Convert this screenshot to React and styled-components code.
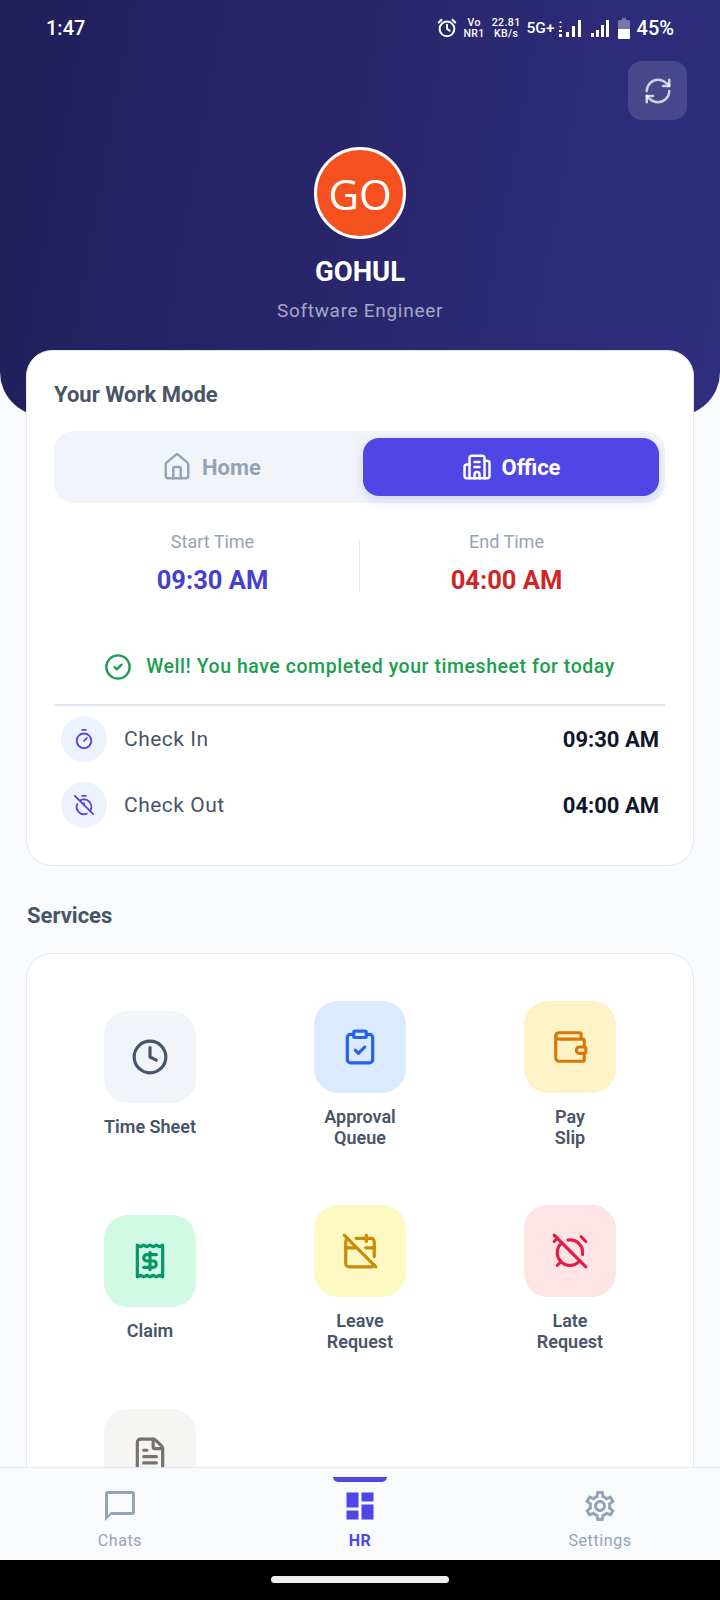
import React from 'react';
import styled, { createGlobalStyle } from 'styled-components';
import {
  RefreshCw, House, Building2, CircleCheck, Timer, TimerOff, Clock, ClipboardCheck,
  Wallet, Receipt, CalendarOff, AlarmClockOff, FileText,
} from 'lucide-react';
import { MdChatBubbleOutline, MdDashboard, MdOutlineSettings } from 'react-icons/md';

const GlobalStyle = createGlobalStyle`
  html, body {
    margin: 0;
    padding: 0;
    background: #000;
  }
  * {
    box-sizing: border-box;
  }
`;

const Screen = styled.div`
  width: 720px;
  height: 1600px;
  display: flex;
  flex-direction: column;
  overflow: hidden;
  background: #f8fafc;
  font-family: Roboto, "Liberation Sans", sans-serif;
`;

const Scroll = styled.div`
  flex: 1;
  min-height: 0;
  overflow: hidden;
`;

const Hero = styled.header`
  height: 416px;
  margin-bottom: -66px;
  padding: 18px 46px 0;
  display: flex;
  flex-direction: column;
  align-items: center;
  background: linear-gradient(100deg, #211f58 0%, #312e81 100%);
  border-radius: 0 0 44px 44px;
  color: #fff;
`;

const StatusBar = styled.div`
  width: 100%;
  height: 20px;
  display: flex;
  align-items: center;
  justify-content: space-between;
`;

const Clockface = styled.span`
  font-size: 20px;
  font-weight: 500;
`;

const StatusIcons = styled.div`
  display: flex;
  align-items: center;
  gap: 5px;
`;

const TinyStack = styled.span`
  margin: 0 1px;
  display: flex;
  flex-direction: column;
  align-items: center;
  font-size: 10.5px;
  font-weight: 500;
  line-height: 11px;
  letter-spacing: 0.4px;
`;

const Net = styled.span`
  margin-right: -1px;
  font-size: 15.5px;
  font-weight: 500;
`;

const Battery = styled.span`
  margin-left: 2px;
  font-size: 20px;
  font-weight: 500;
`;

const RefreshRow = styled.div`
  width: 100%;
  margin-top: 23px;
  display: flex;
  justify-content: flex-end;
`;

const RefreshButton = styled.button`
  width: 59px;
  height: 59px;
  margin-right: -13px;
  display: flex;
  align-items: center;
  justify-content: center;
  border: 0;
  border-radius: 14px;
  background: rgba(255, 255, 255, 0.13);
  color: rgba(255, 255, 255, 0.75);
`;

const Avatar = styled.div`
  width: 92px;
  height: 92px;
  margin-top: 27px;
  display: flex;
  align-items: center;
  justify-content: center;
  border: 3px solid #fff;
  border-radius: 50%;
  background: #f4511e;
  font-family: "Open Sans", sans-serif;
  font-size: 42px;
  color: #fff;
`;

const Name = styled.h1`
  margin: 18px 0 0;
  font-size: 27.5px;
  line-height: 30px;
  font-weight: 700;
`;

const Role = styled.p`
  margin: 12px 0 0;
  font-size: 19px;
  line-height: 24px;
  letter-spacing: 0.7px;
  color: rgba(255, 255, 255, 0.6);
`;

const Card = styled.section`
  margin: 0 26px;
  background: #fff;
  border: 1.5px solid #e2e8f0;
  border-radius: 26px;
`;

const WorkCard = styled(Card)`
  position: relative;
  height: 516px;
  padding: 30px 28px 0 27px;
`;

const CardTitle = styled.h2`
  margin: 0;
  font-size: 22px;
  line-height: 28px;
  font-weight: 700;
  color: #475569;
`;

const Toggle = styled.div`
  height: 72px;
  margin-top: 22px;
  padding: 7px 6px;
  display: grid;
  grid-template-columns: 1fr 296px;
  background: #f1f5f9;
  border-radius: 20px;
`;

const ToggleOption = styled.div`
  display: flex;
  align-items: center;
  justify-content: center;
  gap: 10px;
  border-radius: 16px;
  font-size: 22px;
  font-weight: 700;
  color: ${(p) => (p.$active ? '#fff' : '#94a3b8')};
  background: ${(p) => (p.$active ? '#4f46e5' : 'transparent')};
  box-shadow: ${(p) => (p.$active ? '0 4px 12px rgba(79, 70, 229, 0.2)' : 'none')};
`;

const Times = styled.div`
  margin-top: 27px;
  padding: 0 12px;
  display: grid;
  grid-template-columns: 1fr 1px 1fr;
  align-items: center;
`;

const TimeCell = styled.div`
  display: flex;
  flex-direction: column;
  align-items: center;
  gap: 12px;
`;

const TimeLabel = styled.span`
  font-size: 18px;
  line-height: 24px;
  color: #94a3b8;
`;

const TimeValue = styled.span`
  font-size: 25.5px;
  line-height: 28px;
  font-weight: 700;
  color: ${(p) => p.$color};
`;

const VRule = styled.div`
  height: 53px;
  margin-top: 6px;
  background: #e2e8f0;
`;

const Message = styled.div`
  margin-top: 59px;
  display: flex;
  align-items: center;
  justify-content: center;
  gap: 14px;
  font-size: 19.5px;
  line-height: 28px;
  font-weight: 500;
  letter-spacing: 0.55px;
  color: #1b9e4f;
`;

const HRule = styled.div`
  height: 2px;
  margin-top: 23px;
  background: #e2e8f0;
`;

const CheckRows = styled.div`
  padding: 10px 6px 0 7px;
  display: flex;
  flex-direction: column;
  gap: 20px;
`;

const CheckRow = styled.div`
  display: flex;
  align-items: center;
  gap: 17px;
`;

const CheckIcon = styled.div`
  width: 46px;
  height: 46px;
  display: flex;
  align-items: center;
  justify-content: center;
  border-radius: 50%;
  background: #eef2ff;
  color: #4f46e5;
`;

const CheckLabel = styled.span`
  flex: 1;
  font-size: 21px;
  letter-spacing: 0.5px;
  color: #475569;
`;

const CheckTime = styled.span`
  font-size: 22px;
  font-weight: 700;
  color: #0f172a;
`;

const SectionTitle = styled.h2`
  margin: 36px 27px 23px;
  font-size: 22px;
  line-height: 28px;
  font-weight: 700;
  color: #475569;
`;

const ServiceCard = styled(Card)`
  padding: 18px 18px 0;
  display: grid;
  grid-template-columns: repeat(3, 1fr);
  grid-auto-rows: 204px;
`;

const Service = styled.div`
  display: flex;
  flex-direction: column;
  align-items: center;
  justify-content: center;
  gap: 13px;
`;

const Tile = styled.div`
  width: 92px;
  height: 92px;
  display: flex;
  align-items: center;
  justify-content: center;
  border-radius: 24px;
  background: ${(p) => p.$bg};
  color: ${(p) => p.$fg};
`;

const ServiceLabel = styled.span`
  min-height: ${(p) => (p.$blank ? '42px' : '0')};
  font-size: 18px;
  line-height: 21px;
  font-weight: 600;
  text-align: center;
  white-space: pre-line;
  color: #475569;
`;

const BottomNav = styled.nav`
  height: 93px;
  flex-shrink: 0;
  display: grid;
  grid-template-columns: repeat(3, 1fr);
  background: #f8fafc;
  border-top: 1.5px solid #e2e8f0;
`;

const NavItem = styled.div`
  position: relative;
  padding-top: 20px;
  display: flex;
  flex-direction: column;
  align-items: center;
  color: ${(p) => (p.$active ? '#4f46e5' : '#94a3b8')};
`;

const NavIndicator = styled.span`
  position: absolute;
  top: 9px;
  left: 93px;
  width: 54px;
  height: 5px;
  border-radius: 0 0 5px 5px;
  background: #4f46e5;
`;

const NavLabel = styled.span`
  margin-top: 6px;
  font-size: 16px;
  line-height: 22px;
  font-weight: ${(p) => (p.$active ? 700 : 400)};
  letter-spacing: 0.6px;
`;

const GestureBar = styled.div`
  height: 40px;
  flex-shrink: 0;
  display: flex;
  align-items: center;
  justify-content: center;
  background: #000;
`;

const GesturePill = styled.span`
  width: 178px;
  height: 7px;
  margin-top: -1px;
  border-radius: 4px;
  background: #eee;
`;

// status bar glyphs are too small and too specific for an icon package
const AlarmGlyph = () => (
  <svg width="22" height="22" viewBox="0 0 24 24" fill="none" stroke="#fff" strokeWidth="2.2" strokeLinecap="round">
    <circle cx="12" cy="13" r="8" />
    <path d="M12 8.5V13l3 2M3 6l3-3M21 6l-3-3" />
  </svg>
);

const SignalArrows = () => (
  <svg width="22" height="20" viewBox="0 0 22 20" fill="#fff">
    <path d="M0 5l1.5-2L3 5zM0 8h3L1.5 10zM0 12h3v2H0zM0 16h3v3H0z" />
    <rect x="7" y="14" width="3" height="5" />
    <rect x="13" y="8" width="3" height="11" />
    <rect x="19" y="2" width="3" height="17" />
  </svg>
);

const SignalPlain = () => (
  <svg width="23" height="20" viewBox="0 0 23 20" fill="#fff">
    <rect x="5" y="15" width="3" height="4" />
    <rect x="10" y="12" width="3" height="7" />
    <rect x="15" y="7" width="3" height="12" />
    <rect x="20" y="2" width="3" height="17" />
  </svg>
);

const BatteryGlyph = () => (
  <svg width="16" height="21" viewBox="-4 0 16 21">
    <path d="M4 0h4v2h3a1 1 0 0 1 1 1v17a1 1 0 0 1-1 1H1a1 1 0 0 1-1-1V3a1 1 0 0 1 1-1h3z" fill="rgba(255,255,255,0.35)" />
    <path d="M0 11h12v9a1 1 0 0 1-1 1H1a1 1 0 0 1-1-1z" fill="#fff" />
  </svg>
);

const services = [
  { label: 'Time Sheet', Icon: Clock, bg: '#f1f5f9', fg: '#475569' },
  { label: 'Approval\nQueue', Icon: ClipboardCheck, bg: '#dbeafe', fg: '#2563eb' },
  { label: 'Pay\nSlip', Icon: Wallet, bg: '#fef3c7', fg: '#d97706' },
  { label: 'Claim', Icon: Receipt, bg: '#d1fae5', fg: '#059669' },
  { label: 'Leave\nRequest', Icon: CalendarOff, bg: '#fef9c3', fg: '#ca8a04' },
  { label: 'Late\nRequest', Icon: AlarmClockOff, bg: '#ffe4e6', fg: '#e11d48' },
  { label: '', Icon: FileText, bg: '#f5f5f4', fg: '#78716c' },
];

export default function App() {
  return (
    <Screen>
      <GlobalStyle />
      <Scroll>
        <Hero>
          <StatusBar>
            <Clockface>1:47</Clockface>
            <StatusIcons>
              <AlarmGlyph />
              <TinyStack>
                <span>Vo</span>
                <span>NR1</span>
              </TinyStack>
              <TinyStack>
                <span>22.81</span>
                <span>KB/s</span>
              </TinyStack>
              <Net>5G+</Net>
              <SignalArrows />
              <SignalPlain />
              <BatteryGlyph />
              <Battery>45%</Battery>
            </StatusIcons>
          </StatusBar>
          <RefreshRow>
            <RefreshButton>
              <RefreshCw size={30} strokeWidth={2} />
            </RefreshButton>
          </RefreshRow>
          <Avatar>GO</Avatar>
          <Name>GOHUL</Name>
          <Role>Software Engineer</Role>
        </Hero>

        <WorkCard>
          <CardTitle>Your Work Mode</CardTitle>
          <Toggle>
            <ToggleOption>
              <House size={30} strokeWidth={2} />
              Home
            </ToggleOption>
            <ToggleOption $active>
              <Building2 size={30} strokeWidth={2} />
              Office
            </ToggleOption>
          </Toggle>
          <Times>
            <TimeCell>
              <TimeLabel>Start Time</TimeLabel>
              <TimeValue $color="#4740cf">09:30 AM</TimeValue>
            </TimeCell>
            <VRule />
            <TimeCell>
              <TimeLabel>End Time</TimeLabel>
              <TimeValue $color="#d12525">04:00 AM</TimeValue>
            </TimeCell>
          </Times>
          <Message>
            <CircleCheck size={28} strokeWidth={2} />
            Well! You have completed your timesheet for today
          </Message>
          <HRule />
          <CheckRows>
            <CheckRow>
              <CheckIcon>
                <Timer size={22} strokeWidth={2} />
              </CheckIcon>
              <CheckLabel>Check In</CheckLabel>
              <CheckTime>09:30 AM</CheckTime>
            </CheckRow>
            <CheckRow>
              <CheckIcon>
                <TimerOff size={22} strokeWidth={2} />
              </CheckIcon>
              <CheckLabel>Check Out</CheckLabel>
              <CheckTime>04:00 AM</CheckTime>
            </CheckRow>
          </CheckRows>
        </WorkCard>

        <SectionTitle>Services</SectionTitle>
        <ServiceCard>
          {services.map(({ label, Icon, bg, fg }) => (
            <Service key={label || 'hidden'}>
              <Tile $bg={bg} $fg={fg}>
                <Icon size={38} strokeWidth={2} />
              </Tile>
              <ServiceLabel $blank={!label}>{label}</ServiceLabel>
            </Service>
          ))}
        </ServiceCard>
      </Scroll>

      <BottomNav>
        <NavItem>
          <MdChatBubbleOutline size={36} />
          <NavLabel>Chats</NavLabel>
        </NavItem>
        <NavItem $active>
          <NavIndicator />
          <MdDashboard size={36} />
          <NavLabel $active>HR</NavLabel>
        </NavItem>
        <NavItem>
          <MdOutlineSettings size={36} />
          <NavLabel>Settings</NavLabel>
        </NavItem>
      </BottomNav>
      <GestureBar>
        <GesturePill />
      </GestureBar>
    </Screen>
  );
}
